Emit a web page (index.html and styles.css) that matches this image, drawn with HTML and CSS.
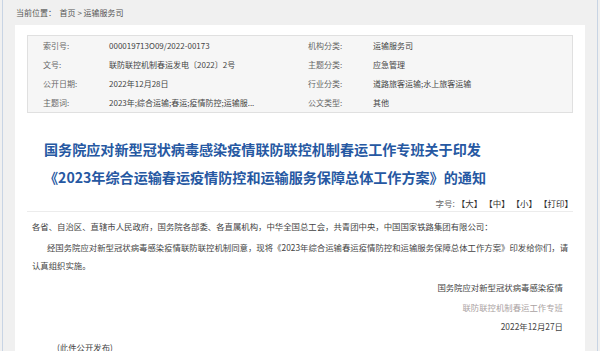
FILE: index.html
```html
<!DOCTYPE html>
<html lang="zh">
<head>
<meta charset="utf-8">
<link rel="stylesheet" href="styles.css">
</head>
<body>
<div class="page">
  <div class="crumb">当前位置：&nbsp;&nbsp;首页 &gt; 运输服务司</div>
  <div class="panel">
    <div class="meta">
      <span class="lb">索引号:</span><span class="vl">000019713O09/2022-00173</span>
      <span class="lb">机构分类:</span><span class="vl">运输服务司</span>
      <span class="lb">文号:</span><span class="vl">联防联控机制春运发电〔2022〕2号</span>
      <span class="lb">主题分类:</span><span class="vl">应急管理</span>
      <span class="lb">公开日期:</span><span class="vl">2022年12月28日</span>
      <span class="lb">行业分类:</span><span class="vl">道路旅客运输;水上旅客运输</span>
      <span class="lb">主题词:</span><span class="vl">2023年;综合运输;春运;疫情防控;运输服...</span>
      <span class="lb">公文类型:</span><span class="vl">其他</span>
    </div>
    <h1 class="title"><span class="tl">国务院应对新型冠状病毒感染疫情联防联控机制春运工作专班关于印发</span><span class="tl">《2023年综合运输春运疫情防控和运输服务保障总体工作方案》的通知</span></h1>
    <div class="size">字号: <b>【大】</b> <b>【中】</b> <b>【小】</b> <b>【打印】</b></div>
    <div class="body">
      <p class="to">各省、自治区、直辖市人民政府，国务院各部委、各直属机构，中华全国总工会，共青团中央，中国国家铁路集团有限公司：</p>
      <p class="para">经国务院应对新型冠状病毒感染疫情联防联控机制同意，现将《2023年综合运输春运疫情防控和运输服务保障总体工作方案》印发给你们，请认真组织实施。</p>
      <div class="sign">
        <p>国务院应对新型冠状病毒感染疫情</p>
        <p class="stamp">联防联控机制春运工作专班</p>
        <p>2022年12月27日</p>
      </div>
      <p class="pub">(此件公开发布)</p>
    </div>
  </div>
</div>
</body>
</html>
```

FILE: styles.css
```css
* { box-sizing: border-box; }
html, body { margin: 0; padding: 0; }
body {
  background: #f0f0f0;
  font-family: "Noto Sans CJK SC", "Noto Sans", sans-serif;
  color: #333;
  height: 351px;
  overflow: hidden;
}
.page {
  margin: 0 2px;
  border-left: 1px solid #c8d4e4;
  border-right: 1px solid #c8d4e4;
  padding: 0 12px;
  min-height: 351px;
}
.crumb {
  height: 25px;
  line-height: 25px;
  font-size: 8px;
  color: #555;
  padding-left: 1px;
}
.panel {
  background: #fff;
  padding: 10px 12px 20px;
}
.meta {
  background: #f6f6f6;
  border: 1px solid #e0e0e0;
  display: grid;
  grid-template-columns: 66px 199px 65px 1fr;
  grid-auto-rows: 19px;
  padding: 0 0 0 15px;
  font-size: 8px;
  align-items: center;
}
.meta .lb { color: #666; }
.meta .vl { color: #444; }
.title {
  margin: 22px 0 0;
  padding-left: 17px;
  display: flex;
  flex-direction: column;
  align-items: flex-start;
  font-size: 14.1px;
  font-weight: bold;
  color: #2658a2;
}
.tl {
  display: block;
  height: 28px;
  line-height: 28px;
  white-space: nowrap;
}
.size {
  height: 21px;
  text-align: right;
  font-size: 8.5px;
  line-height: 14px;
  padding-top: 5px;
  color: #666;
  border-bottom: 1px solid #ececec;
}
.size b { font-weight: normal; color: #333; }
.body {
  font-size: 8.4px;
  color: #444;
  padding: 0 2px 0 5px;
}
.body p { margin: 0; }
.to { margin-top: 5px !important; line-height: 18px; }
.para { margin-top: 3px !important; text-indent: 15px; line-height: 18px; }
.sign {
  margin-top: 4px;
  text-align: right;
  line-height: 19.5px;
  padding-right: 8px;
}
.stamp { color: #aaa2a2; }
.pub { margin-top: 0 !important; padding-left: 25px; line-height: 20px; }
```
